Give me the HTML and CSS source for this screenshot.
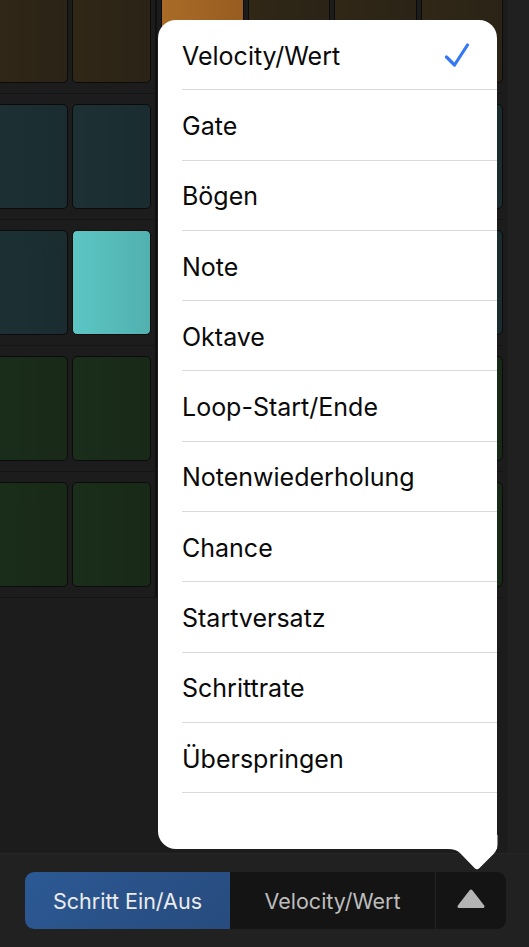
FILE: index.html
```html
<!DOCTYPE html>
<html lang="de">
<head>
<meta charset="utf-8">
<title>Step Sequencer</title>
<link rel="stylesheet" href="styles.css">
</head>
<body>
<div class="screen">
  <div class="grid-area">
    <div class="grid">
      <div class="row">
        <div class="group group-a"><div class="pad brown"></div><div class="pad brown"></div></div>
        <div class="group group-b"><div class="pad orange"></div><div class="pad brown"></div><div class="pad brown"></div><div class="pad brown"></div></div>
      </div>
      <div class="row">
        <div class="group group-a"><div class="pad teal"></div><div class="pad teal"></div></div>
        <div class="group group-b"><div class="pad teal"></div><div class="pad teal"></div><div class="pad teal"></div><div class="pad teal"></div></div>
      </div>
      <div class="row">
        <div class="group group-a"><div class="pad teal"></div><div class="pad teal-on"></div></div>
        <div class="group group-b"><div class="pad teal"></div><div class="pad teal"></div><div class="pad teal"></div><div class="pad teal"></div></div>
      </div>
      <div class="row">
        <div class="group group-a"><div class="pad green"></div><div class="pad green"></div></div>
        <div class="group group-b"><div class="pad green"></div><div class="pad green"></div><div class="pad green"></div><div class="pad green"></div></div>
      </div>
      <div class="row">
        <div class="group group-a"><div class="pad green"></div><div class="pad green"></div></div>
        <div class="group group-b"><div class="pad green"></div><div class="pad green"></div><div class="pad green"></div><div class="pad green"></div></div>
      </div>
    </div>
  </div>
  <div class="toolbar">
    <div class="segmented">
      <div class="seg seg-active">Schritt Ein/Aus</div>
      <div class="seg seg-mid">Velocity/Wert</div>
      <div class="seg seg-menu">
        <svg class="up-tri" width="30" height="21" viewBox="0 0 30 21"><path d="M3 18.5 L15 3 L27 18.5 Z" fill="#b4b4b4" stroke="#b4b4b4" stroke-width="3" stroke-linejoin="round"/></svg>
      </div>
    </div>
  </div>

  <div class="popover">
    <ul class="menu">
      <li class="item"><span>Velocity/Wert</span>
        <svg class="check" width="26" height="24" viewBox="0 0 26 24"><path d="M2.5 14 L10.5 22 L23.5 2" fill="none" stroke="#3478f6" stroke-width="3.2" stroke-linecap="round" stroke-linejoin="round"/></svg>
      </li>
      <li class="item"><span>Gate</span></li>
      <li class="item"><span>Bögen</span></li>
      <li class="item"><span>Note</span></li>
      <li class="item"><span>Oktave</span></li>
      <li class="item"><span>Loop-Start/Ende</span></li>
      <li class="item"><span>Notenwiederholung</span></li>
      <li class="item"><span>Chance</span></li>
      <li class="item"><span>Startversatz</span></li>
      <li class="item"><span>Schrittrate</span></li>
      <li class="item"><span>Überspringen</span></li>
    </ul>
    <svg class="pop-arrow" width="52" height="38" viewBox="0 0 52 38"><path d="M0 14 Q8 14 12 18 L26.5 33 Q29 35.5 31.5 33 L46 18.5 Q49.5 14.5 49.5 9 L49.5 0 L0 0 Z" fill="#ffffff"/></svg>
  </div>
</div>
</body>
</html>
```

FILE: styles.css
```css
* { box-sizing: border-box; }
html, body { margin: 0; padding: 0; }
body {
  width: 529px;
  height: 947px;
  overflow: hidden;
  background: #1c1c1c;
  font-family: Inter, "Noto Sans", "Liberation Sans", sans-serif;
}
.screen {
  position: relative;
  width: 529px;
  height: 947px;
  display: flex;
  flex-direction: column;
}
.grid-area {
  flex: 1;
  overflow: hidden;
  background: linear-gradient(to right, #1c1c1c 0, #1c1c1c 507px, #202020 508px);
}
.grid {
  margin-top: -33px;
  margin-left: -12px;
  width: 515px;
  border-bottom: 1px solid #141414;
}
.row {
  display: flex;
  border-top: 1px solid #141414;
}
.group {
  display: flex;
  gap: 4px;
  padding: 10px 0;
}
.group-a { width: 163px; }
.group-b {
  flex: 1;
  margin-left: 4px;
  padding-left: 4px;
  border-left: 2px solid #101010;
}
.pad {
  flex: 1;
  height: 105px;
  border-radius: 5px;
  border: 1.5px solid #0b0b0b;
}
.brown { background: linear-gradient(to right, #302717, #2b2316); }
.orange { background: linear-gradient(to right, #a96c27, #985c21); }
.teal { background: linear-gradient(to right, #1d3135, #1a2c2f); }
.teal-on { background: linear-gradient(to right, #5cc6c4, #51b1af); }
.green { background: linear-gradient(to right, #1b2d1b, #182918); }

.toolbar {
  height: 94px;
  background: #212121;
  border-top: 1px solid #262626;
  padding: 18px 23px 0 25px;
}
.segmented {
  display: flex;
  height: 57px;
  border-radius: 9px;
  overflow: hidden;
  background: #141414;
}
.seg {
  display: flex;
  align-items: center;
  justify-content: center;
  font-size: 21.5px;
}
.seg-active {
  width: 205px;
  color: #ececec;
  background: linear-gradient(135deg, #2c5994, #274b7e);
}
.seg-mid {
  width: 206px;
  color: #bdbdbd;
  border-right: 1px solid #232323;
}
.seg-menu { flex: 1; }
.up-tri { margin-top: -5px; }

.popover {
  position: absolute;
  left: 158px;
  top: 20px;
  width: 339px;
  height: 829px;
  background: #ffffff;
  border-radius: 18px 18px 0 18px;
}
.menu {
  list-style: none;
  margin: 0;
  padding: 0;
}
.item {
  height: 70.3px;
  margin-left: 24px;
  padding-right: 27px;
  padding-top: 2px;
  border-bottom: 1px solid #dadada;
  display: flex;
  align-items: center;
  justify-content: space-between;
  font-size: 25px;
  color: #0a0a0a;
}
.check { margin-top: -1px; }
.pop-arrow {
  position: absolute;
  left: 290px;
  top: 815px;
}
```
